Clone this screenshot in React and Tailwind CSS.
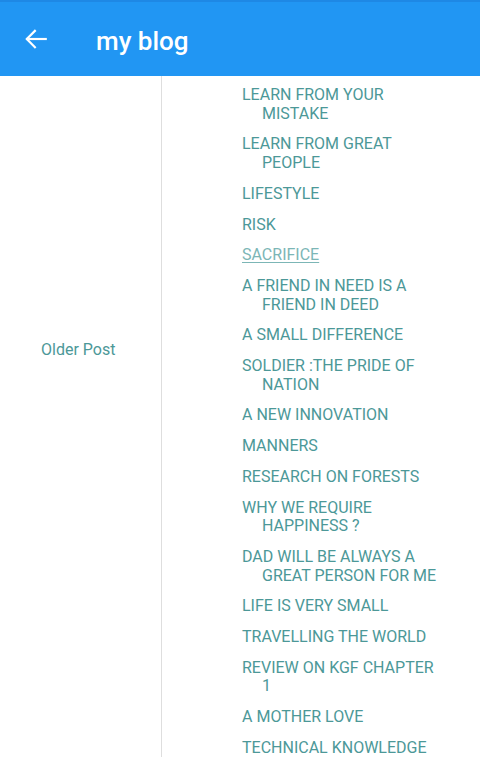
import React from "react";

const posts = [
    "LEARN FROM YOUR MISTAKE",
    "LEARN FROM GREAT PEOPLE",
    "LIFESTYLE",
    "RISK",
    "SACRIFICE",
    "A FRIEND IN NEED IS A FRIEND IN DEED",
    "A SMALL DIFFERENCE",
    "SOLDIER :THE PRIDE OF NATION",
    "A NEW INNOVATION",
    "MANNERS",
    "RESEARCH ON FORESTS",
    "WHY WE REQUIRE HAPPINESS ?",
    "DAD WILL BE ALWAYS A GREAT PERSON FOR ME",
    "LIFE IS VERY SMALL",
    "TRAVELLING THE WORLD",
    "REVIEW ON KGF CHAPTER 1",
    "A MOTHER LOVE",
    "TECHNICAL KNOWLEDGE",
];

function BackArrow() {
    return (
        <svg width="26" height="26" viewBox="0 0 24 24" fill="none" stroke="white" strokeWidth="2" strokeLinecap="square">
            <path d="M21 12H4" />
            <path d="M11 4.5L3.5 12L11 19.5" />
        </svg>
    );
}

export default function App() {
    return (
        <div className="w-[480px] h-[757px] overflow-hidden bg-white font-['Roboto',sans-serif]">
            {/* app bar */}
            <div className="h-[76px] bg-[#2196f3] border-t-2 border-[#1e88e5] flex items-center">
                <div className="pl-[23px] w-[96px] flex items-center">
                    <BackArrow />
                </div>
                <h1 className="text-white text-[26px] font-medium leading-none pt-[3px]">my blog</h1>
            </div>

            <div className="flex">
                {/* older post column */}
                <div className="w-[162px] shrink-0 border-r border-[#dedede] pt-[262px] pl-[41px] h-[681px]">
                    <a className="text-[16px] leading-[18.7px] text-[#4c9898]">Older Post</a>
                </div>

                {/* post list */}
                <ul className="flex flex-col gap-3 pt-[10px] pl-[80px]">
                    {posts.map((p) => (
                        <li
                            key={p}
                            className={`w-[199px] pl-[20px] -indent-[20px] text-[16px] leading-[18.7px] ${
                                p === "SACRIFICE"
                                    ? "text-[#7cb6b6] underline underline-offset-2"
                                    : "text-[#4c9898]"
                            }`}
                        >
                            {p}
                        </li>
                    ))}
                </ul>
            </div>
        </div>
    );
}
